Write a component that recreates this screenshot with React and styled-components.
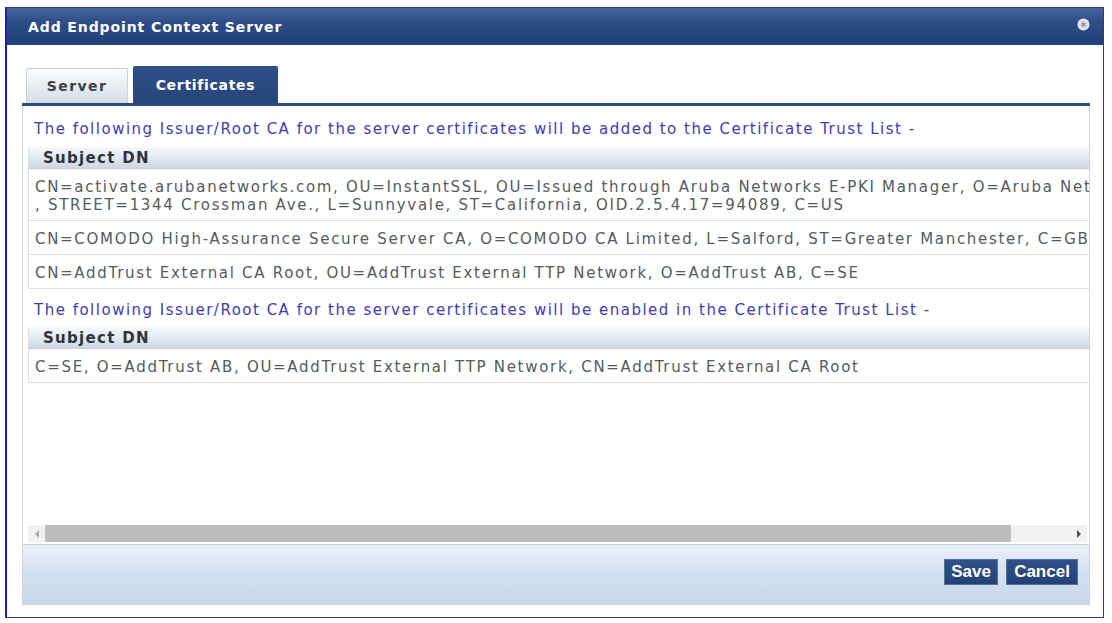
import React from 'react'
import styled, { createGlobalStyle } from 'styled-components'

const GlobalStyle = createGlobalStyle`
  html, body { margin: 0; padding: 0; background: #ffffff; }
  body { font-family: "DejaVu Sans", Verdana, sans-serif; }
`

const Dialog = styled.div`
  margin: 7px 0 0 5px;
  width: 1099px;
  height: 611px;
  box-sizing: border-box;
  border: 1px solid #3c3c6a;
  border-left: 2px solid #2020a0;
  background: #fff;
  display: flex;
  flex-direction: column;
`

const TitleBar = styled.div`
  height: 37px;
  flex: none;
  display: flex;
  align-items: center;
  justify-content: space-between;
  padding: 0 13px 0 21px;
  background: linear-gradient(#4866a1 0%, #2f4f88 35%, #223f76 100%);
  color: #fff;
  font-weight: bold;
  font-size: 14px;
  letter-spacing: 0.9px;
`

const CloseBtn = styled.svg`
  width: 13px;
  height: 13px;
  display: block;
  margin-bottom: 4px;
`

const Body = styled.div`
  flex: 1;
  display: flex;
  flex-direction: column;
  padding: 21px 13px 12px 15px;
  min-height: 0;
`

const TabRow = styled.div`
  display: flex;
  align-items: flex-end;
  gap: 5px;
  padding-left: 4px;
  border-bottom: 3px solid #2b4a7e;
`

const Tab = styled.div`
  height: ${p => (p.$active ? '37px' : '35px')};
  width: ${p => p.$width};
  box-sizing: border-box;
  display: flex;
  align-items: center;
  justify-content: center;
  font-weight: bold;
  font-size: 14px;
  letter-spacing: ${p => (p.$active ? '0.7px' : '1.4px')};
  color: ${p => (p.$active ? '#ffffff' : '#3b3f48')};
  background: ${p =>
    p.$active
      ? 'linear-gradient(#2f5088, #264579)'
      : 'linear-gradient(#fbfcfd, #d5dde8)'};
  border: 1px solid ${p => (p.$active ? '#2b4a7e' : '#c9d0da')};
  border-bottom: none;
  border-radius: 2px 2px 0 0;
`

const Panel = styled.div`
  flex: 1;
  display: flex;
  flex-direction: column;
  border: 1px solid #d2d6dc;
  border-top: none;
  min-height: 0;
`

// the table is wider than the panel; the scrollbar below stands at the left end
const Viewport = styled.div`
  flex: 1;
  overflow: hidden;
  padding: 1px 0 0 5px;
  min-height: 0;
`

const Inner = styled.div`
  width: 1500px;
`

const Message = styled.div`
  padding: ${p => (p.$tight ? '12px 6px 8px' : '13px 6px 9px')};
  line-height: 18px;
  font-size: 15px;
  letter-spacing: 1.5px;
  color: #3d3db0;
  white-space: nowrap;
`

const Table = styled.div`
  border-left: 1px solid #dcdfe4;
`

const HeadCell = styled.div`
  height: 22px;
  box-sizing: border-box;
  padding-left: 14px;
  display: flex;
  align-items: center;
  font-weight: bold;
  font-size: 15px;
  letter-spacing: 1.3px;
  color: #2f333a;
  background: linear-gradient(#f7f9fb, #dfe6ef 60%, #ccd6e3);
  border-bottom: 1px solid #c6ceda;
`

const Row = styled.div`
  padding: 9px 6px 6px 6px;
  line-height: 18px;
  font-size: 15px;
  letter-spacing: 1.7px;
  color: #555a60;
  white-space: nowrap;
  border-bottom: 1px solid #dcdfe4;
`

const ScrollBar = styled.div`
  height: 17px;
  flex: none;
  margin: 0 2px 2px 5px;
  display: flex;
  align-items: center;
  background: #f1f1f1;
`

const Arrow = styled.div`
  width: 17px;
  height: 17px;
  flex: none;
  display: flex;
  align-items: center;
  justify-content: center;
`

const Track = styled.div`
  flex: 1;
  height: 17px;
  display: flex;
  padding-right: 59px;
`

const Thumb = styled.div`
  flex: 1;
  background: #bdbdbd;
`

const Footer = styled.div`
  height: 60px;
  flex: none;
  box-sizing: border-box;
  display: flex;
  align-items: flex-end;
  justify-content: flex-end;
  gap: 8px;
  padding: 0 11px 19px 0;
  background: linear-gradient(#e9eff8, #d3e0ef 50%, #c7d7ea);
  border-top: 1px solid #c5cdd9;
`

const Button = styled.button`
  height: 26px;
  width: ${p => p.$width};
  padding: 0;
  border: 1px solid #56719c;
  background: linear-gradient(#2f5089, #244374);
  color: #fff;
  font-family: "Liberation Sans", Arial, sans-serif;
  font-weight: bold;
  font-size: 17px;
  cursor: pointer;
`

const added = [
  [
    'CN=activate.arubanetworks.com, OU=InstantSSL, OU=Issued through Aruba Networks E-PKI Manager, O=Aruba Networks',
    ', STREET=1344 Crossman Ave., L=Sunnyvale, ST=California, OID.2.5.4.17=94089, C=US',
  ],
  ['CN=COMODO High-Assurance Secure Server CA, O=COMODO CA Limited, L=Salford, ST=Greater Manchester, C=GB'],
  ['CN=AddTrust External CA Root, OU=AddTrust External TTP Network, O=AddTrust AB, C=SE'],
]

const enabled = [['C=SE, O=AddTrust AB, OU=AddTrust External TTP Network, CN=AddTrust External CA Root']]

const CertTable = ({ rows }) => (
  <Table>
    <HeadCell>Subject DN</HeadCell>
    {rows.map((lines, i) => (
      <Row key={i}>
        {lines.map((l, j) => (
          <div key={j}>{l}</div>
        ))}
      </Row>
    ))}
  </Table>
)

const App = () => (
  <>
    <GlobalStyle />
    <Dialog>
      <TitleBar>
        <span>Add Endpoint Context Server</span>
        <CloseBtn viewBox="0 0 13 13">
          <circle cx="6.5" cy="6.5" r="6" fill="#e4e6ec" />
          <circle cx="6.5" cy="6.5" r="3.2" fill="#c7cad3" />
          <path d="M5 5 L8 8 M8 5 L5 8" stroke="#8a8f9c" strokeWidth="1.2" />
        </CloseBtn>
      </TitleBar>
      <Body>
        <TabRow>
          <Tab $width="102px">Server</Tab>
          <Tab $active $width="145px">Certificates</Tab>
        </TabRow>
        <Panel>
          <Viewport>
            <Inner>
              <Message>
                The following Issuer/Root CA for the server certificates will be added to the Certificate Trust List -
              </Message>
              <CertTable rows={added} />
              <Message $tight>
                The following Issuer/Root CA for the server certificates will be enabled in the Certificate Trust List -
              </Message>
              <CertTable rows={enabled} />
            </Inner>
          </Viewport>
          <ScrollBar>
            <Arrow>
              <svg width="6" height="8" viewBox="0 0 6 8">
                <path d="M5 0 L1 4 L5 8 Z" fill="#a9a9a9" />
              </svg>
            </Arrow>
            <Track>
              <Thumb />
            </Track>
            <Arrow>
              <svg width="6" height="8" viewBox="0 0 6 8">
                <path d="M1 0 L5 4 L1 8 Z" fill="#505050" />
              </svg>
            </Arrow>
          </ScrollBar>
          <Footer>
            <Button $width="54px">Save</Button>
            <Button $width="72px">Cancel</Button>
          </Footer>
        </Panel>
      </Body>
    </Dialog>
  </>
)

export default App
